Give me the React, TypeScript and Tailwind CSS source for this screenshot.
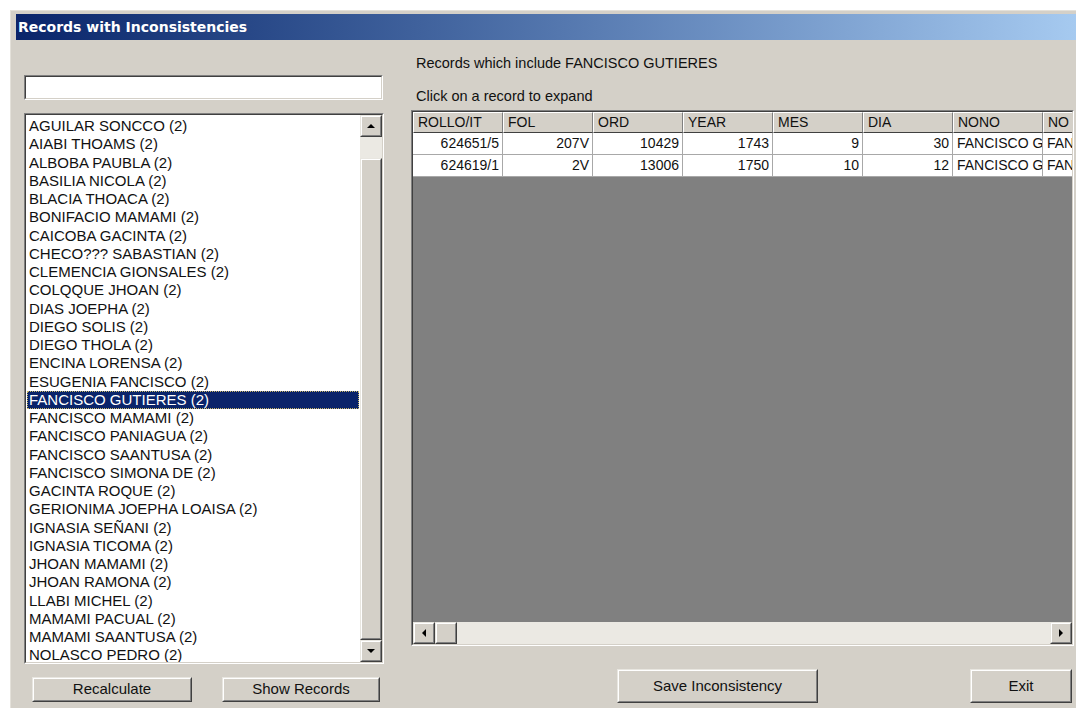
import React from 'react'

const names = [
  'AGUILAR SONCCO (2)',
  'AIABI THOAMS (2)',
  'ALBOBA PAUBLA (2)',
  'BASILIA NICOLA (2)',
  'BLACIA THOACA (2)',
  'BONIFACIO MAMAMI (2)',
  'CAICOBA GACINTA (2)',
  'CHECO??? SABASTIAN (2)',
  'CLEMENCIA GIONSALES (2)',
  'COLQQUE JHOAN (2)',
  'DIAS JOEPHA (2)',
  'DIEGO SOLIS (2)',
  'DIEGO THOLA (2)',
  'ENCINA LORENSA (2)',
  'ESUGENIA FANCISCO (2)',
  'FANCISCO GUTIERES (2)',
  'FANCISCO MAMAMI (2)',
  'FANCISCO PANIAGUA (2)',
  'FANCISCO SAANTUSA (2)',
  'FANCISCO SIMONA DE (2)',
  'GACINTA ROQUE (2)',
  'GERIONIMA JOEPHA LOAISA (2)',
  'IGNASIA SEÑANI (2)',
  'IGNASIA TICOMA (2)',
  'JHOAN MAMAMI (2)',
  'JHOAN RAMONA (2)',
  'LLABI MICHEL (2)',
  'MAMAMI PACUAL (2)',
  'MAMAMI SAANTUSA (2)',
  'NOLASCO PEDRO (2)',
]

const selected = 'FANCISCO GUTIERES (2)'

const columns = ['ROLLO/IT', 'FOL', 'ORD', 'YEAR', 'MES', 'DIA', 'NONO', 'NO']

const records = [
  ['624651/5', '207V', '10429', '1743', '9', '30', 'FANCISCO GUTIERES', 'FANCISCO GUTIERES'],
  ['624619/1', '2V', '13006', '1750', '10', '12', 'FANCISCO GUTIERES', 'FANCISCO GUTIERES'],
]

type Dir = 'up' | 'down' | 'left' | 'right'

function Arrow({ dir }: { dir: Dir }) {
  const horiz = dir === 'left' || dir === 'right'
  const points = {
    up: '0,4 8,4 4,0',
    down: '0,0 8,0 4,4',
    left: '4,0 4,8 0,4',
    right: '0,0 0,8 4,4',
  }[dir]
  return (
    <svg width={horiz ? 4 : 8} height={horiz ? 8 : 4} viewBox={horiz ? '0 0 4 8' : '0 0 8 4'}>
      <polygon points={points} fill="#000" />
    </svg>
  )
}

// classic raised 3D box (buttons, scroll thumbs)
function Raised({ className = '', children }: { className?: string; children?: React.ReactNode }) {
  return (
    <div className={`bg-[#d4d0c8] border border-t-[#e8e6e0] border-l-[#e8e6e0] border-b-[#404040] border-r-[#404040] ${className}`}>
      <div className="w-full h-full flex items-center justify-center border border-t-white border-l-white border-b-[#808080] border-r-[#808080]">
        {children}
      </div>
    </div>
  )
}

// classic sunken 3D box (text box, list, grid)
function Sunken({ className = '', children }: { className?: string; children?: React.ReactNode }) {
  return (
    <div className={`border border-t-[#808080] border-l-[#808080] border-b-white border-r-white ${className}`}>
      <div className="w-full h-full border border-t-[#404040] border-l-[#404040] border-b-[#d4d0c8] border-r-[#d4d0c8] overflow-hidden">
        {children}
      </div>
    </div>
  )
}

function ScrollButton({ dir }: { dir: Dir }) {
  return (
    <Raised className="w-[22px] h-[22px] shrink-0">
      <Arrow dir={dir} />
    </Raised>
  )
}

function Button({ label, className = '' }: { label: string; className?: string }) {
  return (
    <Raised className={`shrink-0 text-[15px] text-[#111] ${className}`}>
      <span>{label}</span>
    </Raised>
  )
}

export default function App() {
  return (
    <div className="w-[1076px] h-[708px] overflow-hidden bg-white pl-[10px] pt-[10px] font-['Liberation_Sans',Arial,sans-serif]">
      <div className="w-[1080px] h-[720px] bg-[#d4d0c8] border-t border-l border-[#e4e1da] pt-[3px] pl-[5px]">
        <div className="w-[1060px] h-[26px] flex items-center pl-[2px] bg-gradient-to-r from-[#0a246a] to-[#a6caf0] text-white text-[14px] font-bold font-['DejaVu_Sans',sans-serif]">
          Records with Inconsistencies
        </div>

        <div className="flex">
          {/* names column */}
          <div className="ml-[8px] w-[361px] flex flex-col">
            <Sunken className="mt-[35px] h-[25px] w-[359px]">
              <div className="w-full h-full bg-white" />
            </Sunken>

            <Sunken className="mt-[13px] h-[551px] w-[360px]">
              <div className="flex h-full">
                <div className="flex-1 bg-white pt-[2px] pl-[1px] pr-[1px] text-[15px] text-[#111]">
                  {names.map(n => (
                    <div
                      key={n}
                      className={
                        n === selected
                          ? 'h-[18.25px] leading-[18.25px] pl-[2px] whitespace-nowrap bg-[#0a246a] text-white outline-1 outline-dotted outline-[#c8b86a] -outline-offset-1'
                          : 'h-[18.25px] leading-[18.25px] pl-[2px] whitespace-nowrap'
                      }
                    >
                      {n}
                    </div>
                  ))}
                </div>
                <div className="w-[22px] flex flex-col">
                  <ScrollButton dir="up" />
                  <div className="h-[21px] bg-[#ebe9e3]" />
                  <Raised className="flex-1" />
                  <ScrollButton dir="down" />
                </div>
              </div>
            </Sunken>

            <div className="mt-[13px] flex">
              <Button label="Recalculate" className="ml-[8px] w-[160px] h-[25px]" />
              <Button label="Show Records" className="ml-[30px] w-[158px] h-[25px]" />
            </div>
          </div>

          {/* records column */}
          <div className="ml-[26px] w-[663px] flex flex-col text-[14px] text-[#111]">
            <div className="mt-[15px] h-[16px] leading-[16px] pl-[5px] text-[14.5px]">Records which include FANCISCO GUTIERES</div>
            <div className="mt-[17px] h-[16px] leading-[16px] pl-[5px] text-[14.5px]">Click on a record to expand</div>

            <Sunken className="mt-[6px] h-[536px] w-[663px]">
              <div className="flex flex-col h-full">
                <div className="flex h-[21px] shrink-0">
                  {columns.map(c => (
                    <div
                      key={c}
                      className="w-[90px] shrink-0 bg-[#d4d0c8] border-t border-l border-t-white border-l-white border-r border-b border-r-[#808080] border-b-[#404040] pl-[4px] leading-[19px] whitespace-nowrap overflow-hidden"
                    >
                      {c}
                    </div>
                  ))}
                </div>
                {records.map((r, i) => (
                  <div key={i} className="flex h-[22px] shrink-0">
                    {r.map((v, j) => (
                      <div
                        key={j}
                        className={`w-[90px] shrink-0 bg-white border-r border-b border-[#a8a8a8] leading-[21px] whitespace-nowrap overflow-hidden ${
                          j < 6 ? 'text-right pr-[3px]' : 'pl-[4px]'
                        }`}
                      >
                        {v}
                      </div>
                    ))}
                  </div>
                ))}
                <div className="flex-1 bg-[#808080]" />
                <div className="flex h-[22px] shrink-0">
                  <ScrollButton dir="left" />
                  <Raised className="w-[22px] h-[22px] shrink-0" />
                  <div className="flex-1 bg-[#ebe9e3]" />
                  <ScrollButton dir="right" />
                </div>
              </div>
            </Sunken>

            <div className="mt-[23px] flex">
              <Button label="Save Inconsistency" className="ml-[206px] w-[201px] h-[34px]" />
              <Button label="Exit" className="ml-[152px] w-[102px] h-[34px]" />
            </div>
          </div>
        </div>
      </div>
    </div>
  )
}
